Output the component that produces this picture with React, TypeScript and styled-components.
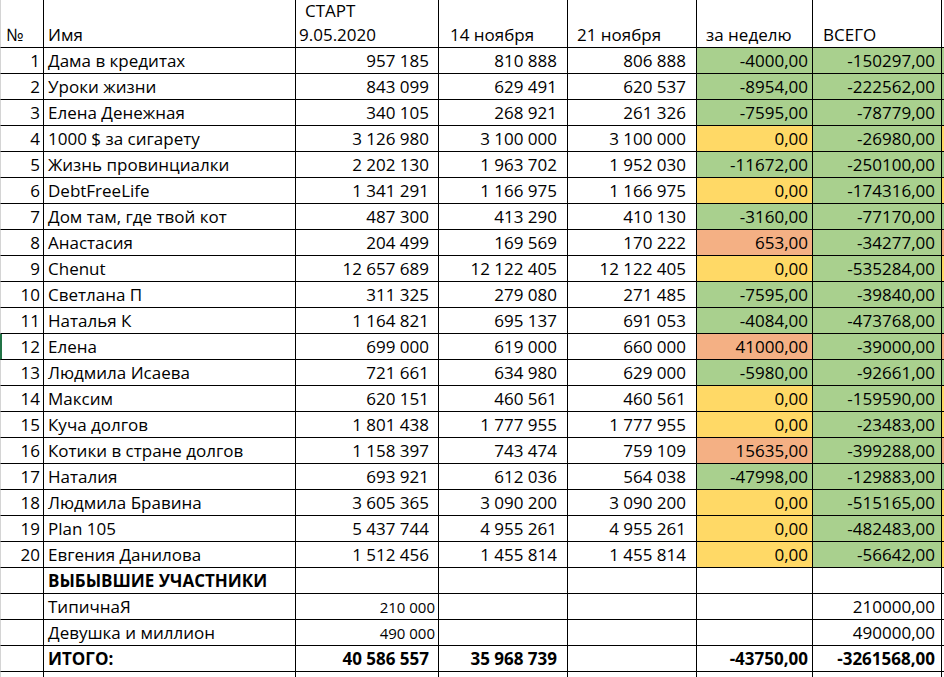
import React from "react";
import styled, { createGlobalStyle, css } from "styled-components";

const GlobalStyle = createGlobalStyle`
  html, body {
    margin: 0;
    padding: 0;
    background: #ffffff;
    overflow: hidden;
  }
  body {
    font-family: "Open Sans", "Noto Sans", "Liberation Sans", sans-serif;
    color: #000;
  }
`;

type Tone = "g" | "y" | "o" | undefined;

const toneColor: Record<string, string> = {
  g: "#a9d08e",
  y: "#ffd966",
  o: "#f4b084",
};

const Sheet = styled.div`
  display: grid;
  grid-template-columns: 44px 252px 143px 129px 129px 116px 129px 2px;
  grid-template-rows: 48px;
  grid-auto-rows: 26px;
  width: 944px;
  height: 677px;
  overflow: hidden;
`;

const Cell = styled.div<{
  $align?: "left" | "right";
  $tone?: Tone;
  $bold?: boolean;
  $small?: boolean;
  $pl?: number;
  $pr?: number;
  $first?: boolean;
  $marked?: boolean;
  $strip?: boolean;
}>`
  box-sizing: border-box;
  display: flex;
  align-items: flex-end;
  justify-content: ${(p) => (p.$align === "right" ? "flex-end" : "flex-start")};
  padding: 0 ${(p) => p.$pr ?? 3}px 2px ${(p) => p.$pl ?? 3}px;
  border-bottom: 1px solid #000;
  border-right: ${(p) => (p.$strip ? "none" : "1px solid #000")};
  background: ${(p) => (p.$tone ? toneColor[p.$tone] : "#fff")};
  font-size: ${(p) => (p.$small ? "15px" : "17px")};
  font-weight: ${(p) => (p.$bold ? 700 : 400)};
  line-height: 20px;
  white-space: nowrap;
  overflow: hidden;
  ${(p) =>
    p.$first &&
    css`
      border-left: 1px solid #d4d4d4;
    `}
  ${(p) =>
    p.$marked &&
    css`
      border-left-color: #217346;
      box-shadow: inset 1px 0 0 #217346;
    `}
`;

const HeadCell = styled(Cell)`
  flex-direction: column;
  justify-content: flex-end;
  align-items: flex-start;
  line-height: 24px;
  padding-bottom: 0;
`;

const HeadLine = styled.span<{ $indent?: number }>`
  padding-left: ${(p) => p.$indent ?? 0}px;
`;

type Row = [number, string, string, string, string, string, Tone, string];

const rows: Row[] = [
  [1, "Дама в кредитах", "957 185", "810 888", "806 888", "-4000,00", "g", "-150297,00"],
  [2, "Уроки жизни", "843 099", "629 491", "620 537", "-8954,00", "g", "-222562,00"],
  [3, "Елена Денежная", "340 105", "268 921", "261 326", "-7595,00", "g", "-78779,00"],
  [4, "1000 $ за сигарету", "3 126 980", "3 100 000", "3 100 000", "0,00", "y", "-26980,00"],
  [5, "Жизнь провинциалки", "2 202 130", "1 963 702", "1 952 030", "-11672,00", "g", "-250100,00"],
  [6, "DebtFreeLife", "1 341 291", "1 166 975", "1 166 975", "0,00", "y", "-174316,00"],
  [7, "Дом там, где твой кот", "487 300", "413 290", "410 130", "-3160,00", "g", "-77170,00"],
  [8, "Анастасия", "204 499", "169 569", "170 222", "653,00", "o", "-34277,00"],
  [9, "Chenut", "12 657 689", "12 122 405", "12 122 405", "0,00", "y", "-535284,00"],
  [10, "Светлана П", "311 325", "279 080", "271 485", "-7595,00", "g", "-39840,00"],
  [11, "Наталья К", "1 164 821", "695 137", "691 053", "-4084,00", "g", "-473768,00"],
  [12, "Елена", "699 000", "619 000", "660 000", "41000,00", "o", "-39000,00"],
  [13, "Людмила Исаева", "721 661", "634 980", "629 000", "-5980,00", "g", "-92661,00"],
  [14, "Максим", "620 151", "460 561", "460 561", "0,00", "y", "-159590,00"],
  [15, "Куча долгов", "1 801 438", "1 777 955", "1 777 955", "0,00", "y", "-23483,00"],
  [16, "Котики в стране долгов", "1 158 397", "743 474", "759 109", "15635,00", "o", "-399288,00"],
  [17, "Наталия", "693 921", "612 036", "564 038", "-47998,00", "g", "-129883,00"],
  [18, "Людмила Бравина", "3 605 365", "3 090 200", "3 090 200", "0,00", "y", "-515165,00"],
  [19, "Plan 105", "5 437 744", "4 955 261", "4 955 261", "0,00", "y", "-482483,00"],
  [20, "Евгения Данилова", "1 512 456", "1 455 814", "1 455 814", "0,00", "y", "-56642,00"],
];

type Extra = {
  name: string;
  start?: string;
  d14?: string;
  week?: string;
  total?: string;
  bold?: boolean;
  smallStart?: boolean;
};

const extras: Extra[] = [
  { name: "ВЫБЫВШИЕ УЧАСТНИКИ", bold: true },
  { name: "ТипичнаЯ", start: "210 000", total: "210000,00", smallStart: true },
  { name: "Девушка и миллион", start: "490 000", total: "490000,00", smallStart: true },
  {
    name: "ИТОГО:",
    start: "40 586 557",
    d14: "35 968 739",
    week: "-43750,00",
    total: "-3261568,00",
    bold: true,
  },
];

export default function App() {
  return (
    <>
      <GlobalStyle />
      <Sheet>
        <HeadCell $first>
          <HeadLine $indent={2}>№</HeadLine>
        </HeadCell>
        <HeadCell $pl={4}>
          <HeadLine>Имя</HeadLine>
        </HeadCell>
        <HeadCell>
          <HeadLine $indent={6}>СТАРТ</HeadLine>
          <HeadLine>9.05.2020</HeadLine>
        </HeadCell>
        <HeadCell $pl={11}>
          <HeadLine>14 ноября</HeadLine>
        </HeadCell>
        <HeadCell $pl={9}>
          <HeadLine>21 ноября</HeadLine>
        </HeadCell>
        <HeadCell $pl={9}>
          <HeadLine>за неделю</HeadLine>
        </HeadCell>
        <HeadCell $pl={10}>
          <HeadLine>ВСЕГО</HeadLine>
        </HeadCell>
        <HeadCell $strip />

        {rows.map(([n, name, start, d14, d21, week, tone, total]) => (
          <React.Fragment key={n}>
            <Cell $first $marked={n === 12} $align="right" $pr={3}>
              {n}
            </Cell>
            <Cell $pl={4}>{name}</Cell>
            <Cell $align="right" $pr={9}>
              {start}
            </Cell>
            <Cell $align="right" $pr={10}>
              {d14}
            </Cell>
            <Cell $align="right" $pr={10}>
              {d21}
            </Cell>
            <Cell $align="right" $pr={4} $tone={tone}>
              {week}
            </Cell>
            <Cell $align="right" $pr={6} $tone="g">
              {total}
            </Cell>
            <Cell $strip $tone={tone} />
          </React.Fragment>
        ))}

        {extras.map((e) => (
          <React.Fragment key={e.name}>
            <Cell $first />
            <Cell $pl={4} $bold={e.bold}>
              {e.name}
            </Cell>
            <Cell
              $align="right"
              $pr={e.smallStart ? 3 : 9}
              $small={e.smallStart}
              $bold={e.bold}
            >
              {e.start}
            </Cell>
            <Cell $align="right" $pr={10} $bold={e.bold}>
              {e.d14}
            </Cell>
            <Cell />
            <Cell $align="right" $pr={4} $bold={e.bold}>
              {e.week}
            </Cell>
            <Cell $align="right" $pr={6} $bold={e.bold}>
              {e.total}
            </Cell>
            <Cell $strip />
          </React.Fragment>
        ))}

        <Cell $first />
        <Cell />
        <Cell />
        <Cell />
        <Cell />
        <Cell />
        <Cell />
        <Cell $strip />
      </Sheet>
    </>
  );
}
